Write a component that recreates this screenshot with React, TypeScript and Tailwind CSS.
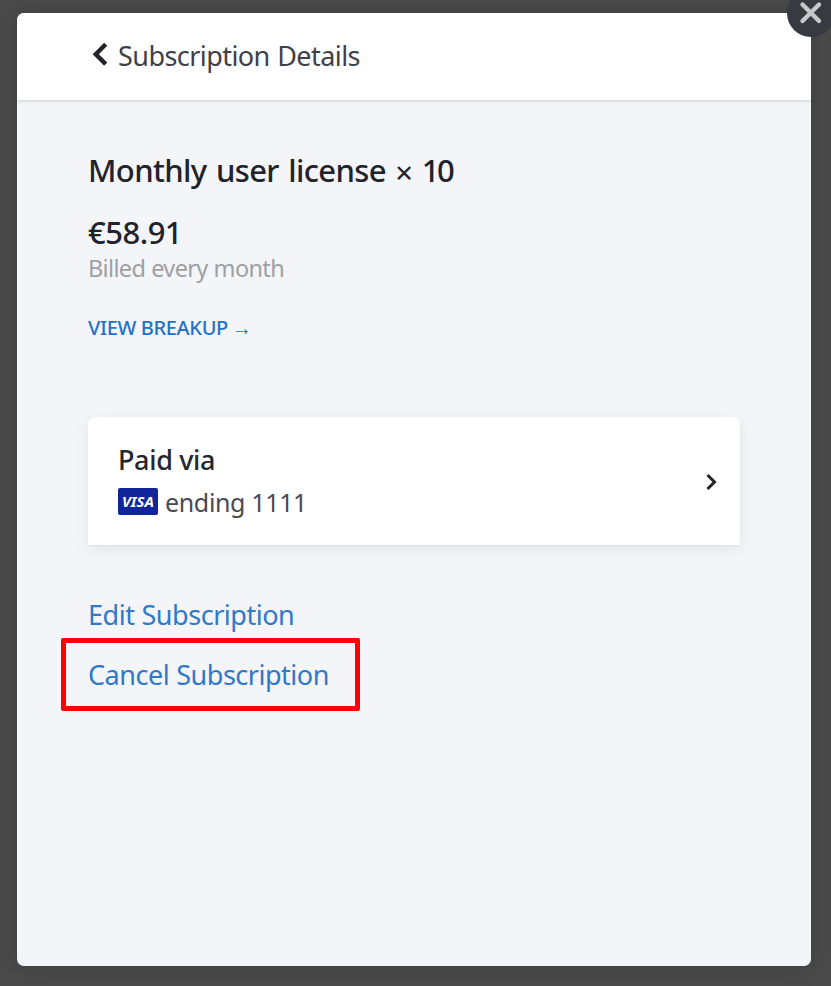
export default function App() {
  return (
    <div className="relative h-[986px] w-[831px] overflow-hidden bg-[#4a4a4a] pt-[13px] pl-[17px] font-['Noto_Sans','Open_Sans',sans-serif]">
      <main className="flex h-[953px] w-[794px] flex-col overflow-hidden rounded-[7px] bg-[#f3f5f9] shadow-[0_0_24px_rgba(0,0,0,0.16)]">
        <header className="relative flex h-[87px] shrink-0 items-start bg-white pl-[75px] shadow-[0_1px_3px_rgba(0,0,0,0.18)]">
          <svg className="mt-[29px] h-6 w-[17px]" viewBox="0 0 17 24" fill="none" stroke="#22222b" strokeWidth="4.4">
            <path d="M13.7 2.3 L3.8 12.2 L13.7 22.1" />
          </svg>
          <h1 className="mt-[25px] ml-[9px] text-[27px] leading-9 font-normal tracking-[-0.56px] [word-spacing:1px] whitespace-nowrap text-[#40404a]">Subscription Details</h1>
        </header>
        <section className="flex flex-col items-start px-[71px] pt-[50px]">
          <h2 className="text-[31px] leading-10 font-medium tracking-[-0.63px] [word-spacing:2px] whitespace-nowrap text-[#22222a]">
            Monthly user license <span className="relative top-0.5 font-normal">×</span> <span className="tracking-[-2.6px]">10</span>
          </h2>
          <p className="mt-[22px] text-[31px] leading-10 font-medium tracking-[-0.5px] text-[#22222a]">€58.91</p>
          <p className="text-[23.5px] leading-8 tracking-[-0.65px] [word-spacing:0.5px] whitespace-nowrap text-[#a0a0a4]">Billed every month</p>
          <a className="mt-[30px] text-[20px] leading-7 font-medium tracking-[-0.35px] whitespace-nowrap text-[#2472c8]">
            VIEW BREAKUP <span className="ml-[-1px]">→</span>
          </a>
          <button className="mt-[75px] flex h-32 w-[652px] items-start justify-between rounded-t-[7px] bg-white pt-[25px] pr-[21px] pl-[30px] text-left shadow-[0_4px_16px_rgba(0,0,0,0.07),0_1px_1px_rgba(0,0,0,0.04)]">
            <span className="flex flex-col">
              <span className="text-[27px] leading-9 font-medium tracking-[-0.35px] whitespace-nowrap text-[#26262e]">Paid via</span>
              <span className="mt-[6px] flex items-start">
                <span className="mt-1 flex h-[27px] w-10 items-center justify-center rounded-[2px] bg-[#10259b] text-[15px] leading-none font-bold text-white italic">VISA</span>
                <span className="ml-[7px] text-[25px] leading-9 tracking-[-0.35px] whitespace-nowrap text-[#4a4a50]">ending 1111</span>
              </span>
            </span>
            <svg className="mt-[31px] h-[18px] w-[14px]" viewBox="0 0 14 18" fill="none" stroke="#22222b" strokeWidth="3">
              <path d="M2.5 2 L9.5 9 L2.5 16" />
            </svg>
          </button>
          <a className="mt-[52px] text-[27px] leading-9 tracking-[-0.47px] [word-spacing:0.5px] whitespace-nowrap text-[#2f78ca]">Edit Subscription</a>
          <div className="relative mt-[24px]">
            <a className="text-[27px] leading-9 tracking-[-0.48px] [word-spacing:0.5px] whitespace-nowrap text-[#2f78ca]">Cancel Subscription</a>
            <span className="pointer-events-none absolute top-[-19px] left-[-27px] h-[73px] w-[299px] rounded-[2px] border-5 border-[#ff0000]" />
          </div>
        </section>
      </main>
      <button className="absolute top-[-11px] left-[787px] flex size-12 items-center justify-center rounded-full bg-[#393941]" aria-label="Close">
        <svg className="size-6" viewBox="0 0 24 24" fill="none" stroke="#c8c8cb" strokeWidth="4.4" strokeLinecap="round">
          <path d="M3.5 3.5 L20 20 M20 3.5 L3.5 20" />
        </svg>
      </button>
    </div>
  );
}
